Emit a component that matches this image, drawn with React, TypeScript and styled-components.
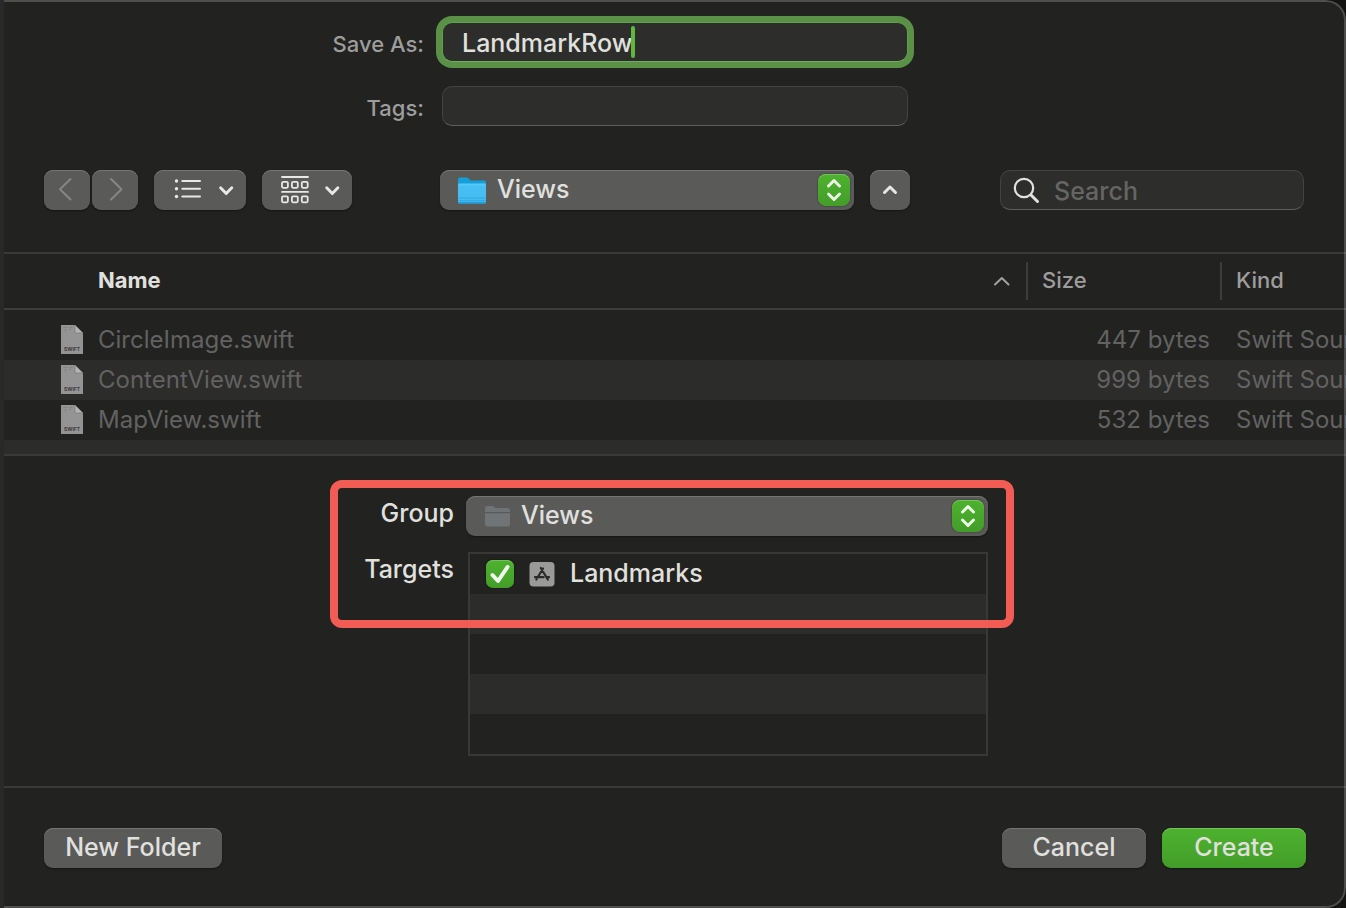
import React from "react";
import styled, { createGlobalStyle, css } from "styled-components";

const GlobalStyle = createGlobalStyle`
  *, *::before, *::after { box-sizing: border-box; }
  body {
    margin: 0;
    background: #141413;
    color: #e0e0df;
    font-family: Inter, "Liberation Sans", sans-serif;
    font-size: 25px;
    font-weight: 500;
    line-height: 32px;
  }
  button, input, select { font: inherit; color: inherit; }
`;

const Dialog = styled.main`
  position: relative;
  display: flex;
  flex-direction: column;
  min-height: 100vh;
  background: #222221;
  border-left: 4px solid #29292a;
  border-radius: 0 20px 20px 0;
  overflow: hidden;

  &::after {
    content: "";
    position: absolute;
    inset: 0 0 0 -4px;
    border: 2px solid rgba(255, 255, 255, 0.2);
    border-left: 0;
    border-radius: 0 20px 20px 0;
    pointer-events: none;
  }
`;

/* ---------- name and tags ---------- */

const NameForm = styled.div`
  display: grid;
  grid-template-columns: 1fr 466px 1fr;
  gap: 24px 18px;
  align-items: center;
  padding-top: 22px;
`;

const FieldLabel = styled.label`
  grid-column: 1;
  justify-self: end;
  padding-top: 4px;
  font-size: 22px;
  color: #9d9d9c;
`;

const fieldBox = css`
  height: 40px;
  border: 1px solid #434342;
  border-bottom-color: #5e5e5d;
  border-radius: 10px;
  background: #2d2d2c;
`;

const FocusedField = styled.div`
  ${fieldBox}
  display: flex;
  align-items: center;
  padding: 0 19px;
  border-color: #5fa04c;
  border-bottom-color: #74ab62;
  box-shadow: 0 0 0 6px #5a9147;
`;

const NameInput = styled.input`
  field-sizing: content;
  max-width: 100%;
  padding: 2px 0 0;
  border: 0;
  outline: 0;
  background: none;
`;

const Caret = styled.span`
  width: 4px;
  height: 32px;
  margin-left: -2px;
  border-radius: 2px;
  background: #5cb83f;
`;

const TagsInput = styled.input`
  ${fieldBox}
  width: 100%;
  padding: 0 19px;
  outline: 0;
`;

/* ---------- buttons and pop-ups ---------- */

const raised = css`
  height: 40px;
  border: 0;
  border-radius: 9px;
  background: #5a5a59;
  box-shadow: inset 0 1px 0 #757574, 0 1px 2px rgba(0, 0, 0, 0.4);
`;

const IconButton = styled.button<{ $width: number }>`
  ${raised}
  display: flex;
  align-items: center;
  justify-content: center;
  width: ${(p) => p.$width}px;
  padding: 0;
`;

const PushButton = styled.button<{ $primary?: boolean; $width: number }>`
  ${raised}
  width: ${(p) => p.$width}px;
  padding: 0 0 2px;
  text-align: center;
  ${(p) =>
    p.$primary &&
    css`
      background: linear-gradient(#4db22f, #439d29);
      box-shadow: inset 0 1px 0 #72c459, 0 1px 2px rgba(0, 0, 0, 0.4);
    `}
`;

const PopupShell = styled.div`
  ${raised}
  display: flex;
  align-items: center;
  gap: 10px;
  flex: 1;
  padding: 0 4px 0 17px;
`;

const PopupSelect = styled.select`
  appearance: none;
  flex: 1;
  height: 40px;
  padding: 0 0 2px;
  border: 0;
  outline: 0;
  background: none;

  option { background: #3a3a39; }
`;

const PopupCap = styled.span`
  display: flex;
  align-items: center;
  justify-content: center;
  width: 32px;
  height: 32px;
  border-radius: 8px;
  background: linear-gradient(#4db22f, #439d29);
  box-shadow: inset 0 1px 0 #72c459, 0 0 2px rgba(0, 0, 0, 0.5);
  pointer-events: none;
`;

/* ---------- toolbar ---------- */

const Toolbar = styled.div`
  display: grid;
  grid-template-columns: 396fr 470px 394fr;
  align-items: center;
  padding: 44px 42px 42px 40px;
`;

const ToolGroup = styled.div<{ $gap: number }>`
  display: flex;
  gap: ${(p) => p.$gap}px;
`;

const SearchField = styled.label`
  ${fieldBox}
  display: flex;
  align-items: center;
  justify-self: end;
  gap: 13px;
  width: 304px;
  padding: 2px 12px 0;
`;

const SearchInput = styled.input`
  flex: 1;
  min-width: 0;
  padding: 0;
  border: 0;
  outline: 0;
  background: none;

  &::placeholder { color: #656564; opacity: 1; }
`;

/* ---------- file list ---------- */

const FileTable = styled.table`
  width: 100%;
  table-layout: fixed;
  border-collapse: collapse;
  border-spacing: 0;
  border-top: 2px solid #3a3a39;

  tbody::before {
    content: "";
    display: block;
    height: 10px;
  }
`;

const HeadCell = styled.th<{ $width?: number }>`
  width: ${(p) => (p.$width ? `${p.$width}px` : "auto")};
  height: 56px;
  padding: 0;
  border-bottom: 2px solid #3d3d3c;
  font-size: 22px;
  text-align: left;
  color: #9d9d9c;
`;

const HeadLabel = styled.div<{ $sorted?: boolean }>`
  display: flex;
  align-items: center;
  justify-content: space-between;
  height: 38px;
  padding: ${(p) => (p.$sorted ? "0 16px 2px 94px" : "0 0 2px 14px")};
  border-left: ${(p) => (p.$sorted ? "0" : "2px solid #3d3d3c")};
  font-weight: ${(p) => (p.$sorted ? 700 : 500)};
  color: ${(p) => (p.$sorted ? "#e0e0df" : "inherit")};
`;

const FileRow = styled.tr`
  height: 40px;
  color: #626261;
  font-size: 24px;
  font-weight: 400;

  &:nth-child(even) { background: #2c2c2b; }
`;

const FileCell = styled.td<{ $end?: boolean }>`
  padding: ${(p) => (p.$end ? "0 10px 0 0" : "0 0 0 16px")};
  text-align: ${(p) => (p.$end ? "right" : "left")};
  white-space: nowrap;
  overflow: hidden;
`;

const FileName = styled.div`
  display: flex;
  align-items: center;
  gap: 14px;
  padding-left: 40px;
`;

const RowRemainder = styled.div`
  height: 16px;
  background: #2c2c2b;
  border-bottom: 2px solid #3a3a39;
`;

/* ---------- group and targets ---------- */

const Options = styled.section`
  flex: 1;
  padding: 24px 0 30px;
`;

const OptionsGrid = styled.div`
  position: relative;
  display: grid;
  grid-template-columns: 124px 522px;
  gap: 16px 12px;
  width: 690px;
  max-width: 100%;
  margin: 0 auto;
  padding-top: 16px;
`;

const OptionLabel = styled.label`
  justify-self: end;
  line-height: 34px;
`;

const Highlight = styled.div`
  position: absolute;
  top: 0;
  left: 0;
  width: 684px;
  height: 148px;
  border: 8px solid #f25c54;
  border-radius: 12px;
  pointer-events: none;
`;

const TargetList = styled.ul`
  justify-self: end;
  width: 520px;
  margin: 0;
  padding: 0;
  border: 2px solid #383837;
  list-style: none;
`;

const TargetRow = styled.li`
  display: flex;
  align-items: center;
  height: 40px;
  padding: 0 16px;

  &:nth-child(even) { background: #2c2c2b; }
`;

const TargetLabel = styled.label`
  display: flex;
  align-items: center;
  gap: 15px;
`;

const TargetName = styled.span`
  padding-bottom: 2px;
`;

const CheckSlot = styled.span`
  display: grid;
  width: 28px;
  height: 28px;

  > * { grid-area: 1 / 1; }
  svg { place-self: center; pointer-events: none; }
`;

const CheckBox = styled.input`
  appearance: none;
  width: 28px;
  height: 28px;
  margin: 0;
  border-radius: 7px;
  background: #5a5a59;
  box-shadow: inset 0 1px 0 #72c459, 0 0 2px rgba(0, 0, 0, 0.5);

  &:checked { background: linear-gradient(#4db22f, #439d29); }
  &:not(:checked) + svg { visibility: hidden; }
`;

/* ---------- footer ---------- */

const Footer = styled.footer`
  display: flex;
  justify-content: space-between;
  padding: 40px;
  border-top: 2px solid #3a3a39;
`;

/* ---------- icons ---------- */

type StrokeProps = { w: number; h: number; d: string; color?: string; width?: number };

const Stroke = ({ w, h, d, color = "#e8e8e7", width = 3 }: StrokeProps) => (
  <svg width={w} height={h} viewBox={`0 0 ${w} ${h}`} fill="none" stroke={color}
    strokeWidth={width} strokeLinecap="round" strokeLinejoin="round" aria-hidden="true">
    <path d={d} />
  </svg>
);

const ViewListIcon = () => (
  <svg width="92" height="40" viewBox="0 0 92 40" fill="none" stroke="#e8e8e7" strokeLinecap="round" strokeLinejoin="round" aria-hidden="true">
    <path d="M28.300 11H46M28.300 18.800H46M28.300 26.500H46" strokeWidth="2" />
    <g fill="#e8e8e7" stroke="none">
      <circle cx="22.500" cy="11" r="1.700" />
      <circle cx="22.500" cy="18.800" r="1.700" />
      <circle cx="22.500" cy="26.500" r="1.700" />
    </g>
    <path d="M66.600 17.800L72.200 23.600L77.800 17.800" strokeWidth="2.900" />
  </svg>
);

const GroupViewIcon = () => (
  <svg width="90" height="40" viewBox="0 0 90 40" fill="none" stroke="#e8e8e7" strokeLinecap="round" strokeLinejoin="round" aria-hidden="true">
    <path d="M20 7H46M20 21.900H46" strokeWidth="1.800" />
    {[11.900, 26.400].map((y) =>
      [20, 29.900, 39.800].map((x) => (
        <rect key={`${x}-${y}`} x={x} y={y} width="5.900" height="5.900" rx="1.200" strokeWidth="1.800" />
      ))
    )}
    <path d="M64.700 17.800L70.300 23.600L75.900 17.800" strokeWidth="2.900" />
  </svg>
);

const UpDownIcon = () => (
  <Stroke w={32} h={32} d="M10.500 12L16 6.500L21.500 12M10.500 20L16 25.500L21.500 20" color="#eaf5e4" />
);

const BlueFolder = () => (
  <svg width="30" height="28" viewBox="0 0 30 28" aria-hidden="true">
    <defs>
      <linearGradient id="folderFront" x1="0" y1="0" x2="0" y2="1">
        <stop offset="0" stopColor="#5ccbf8" />
        <stop offset="0.15" stopColor="#48bff3" />
        <stop offset="1" stopColor="#45bcf2" />
      </linearGradient>
    </defs>
    <g transform="translate(0 0.600)">
      <path d="M1 3a2 2 0 0 1 2-2h6c1.500 0 2 .5 2.800 1.200L13.500 4H27.500a1.500 1.500 0 0 1 1.500 1.500V12H1z" fill="#149fda" />
      <path d="M1 8a1 1 0 0 1 1-1H28a1 1 0 0 1 1 1V25.500a1.500 1.500 0 0 1-1.500 1.500H2.500A1.500 1.500 0 0 1 1 25.500z" fill="url(#folderFront)" />
      <path d="M1 21.500H29M1 24H29" stroke="#2ba6df" strokeWidth="0.800" />
      <path d="M1 25.500H29a1.500 1.500 0 0 1-1.500 1.500H2.500A1.500 1.500 0 0 1 1 25.500z" fill="#1c9bd6" />
    </g>
  </svg>
);

const GrayFolder = () => (
  <svg width="28" height="24" viewBox="0 0 28 24" aria-hidden="true">
    <path d="M2 8V4.200A2.200 2.200 0 0 1 4.200 2H9c1 0 1.500.3 2.200 1L12.500 4H24.500a2.500 2.500 0 0 1 2.500 2.500V8z" fill="#6f7376" />
    <path d="M2 9.300H27V20a2.500 2.500 0 0 1-2.500 2.500H4.500A2.500 2.500 0 0 1 2 20z" fill="#707477" />
  </svg>
);

const SearchIcon = () => (
  <svg width="28" height="28" viewBox="0 0 28 28" fill="none" stroke="#e2e2e1" strokeLinecap="round" aria-hidden="true">
    <circle cx="11" cy="11" r="9.200" strokeWidth="2.200" />
    <path d="M18 18L24.500 24.500" strokeWidth="3" />
  </svg>
);

const SwiftFileIcon = () => (
  <svg width="24" height="32" viewBox="0 0 24 32" aria-hidden="true">
    <path d="M1 1H15L23 9V30H1z" fill="#949494" />
    <path d="M15 1L23 9H16a1 1 0 0 1-1-1z" fill="#b4b4b4" stroke="#6e6e6e" strokeWidth="0.600" />
    <path d="M3.500 3.500H8M9.500 3.500H12.500M4 6H6.500M9 5.500H11M5 8H6.500" stroke="#7e7e7e" strokeWidth="0.700" />
    <text x="12" y="27" textAnchor="middle" fontSize="5" fontWeight="700" fill="#3c3c3c">SWIFT</text>
  </svg>
);

const AppIcon = () => (
  <svg width="26" height="26" viewBox="0 0 26 26" aria-hidden="true">
    <rect x="0.500" y="1" width="25" height="24.500" rx="4" fill="#9a9a99" />
    <g fill="none" stroke="#2b2b2a" strokeWidth="2.200" strokeLinecap="round">
      <path d="M14 7.500L9.200 15.500M11.800 7L18.800 18.500M6 16.200H14.500M17.800 16.200H20" />
      <path d="M7.700 17.800L7.300 18.500" />
    </g>
  </svg>
);

/* ---------- page ---------- */

const files = [
  { name: "CircleImage.swift", size: "447 bytes" },
  { name: "ContentView.swift", size: "999 bytes" },
  { name: "MapView.swift", size: "532 bytes" },
];

export default function App() {
  return (
    <Dialog>
      <GlobalStyle />
      <NameForm>
        <FieldLabel htmlFor="save-as">Save As:</FieldLabel>
        <FocusedField>
          <NameInput id="save-as" defaultValue="LandmarkRow" />
          <Caret />
        </FocusedField>
        <FieldLabel htmlFor="tags">Tags:</FieldLabel>
        <TagsInput id="tags" />
      </NameForm>

      <Toolbar>
        <ToolGroup $gap={16}>
          <ToolGroup $gap={2}>
            <IconButton $width={46} aria-label="Back">
              <Stroke w={46} h={40} d="M26.500 9L16 19.300L26.500 29.500" color="#868685" width={2} />
            </IconButton>
            <IconButton $width={46} aria-label="Forward">
              <Stroke w={46} h={40} d="M19 9L29.500 19.300L19 29.500" color="#868685" width={2} />
            </IconButton>
          </ToolGroup>
          <IconButton $width={92} aria-label="View as list">
            <ViewListIcon />
          </IconButton>
          <IconButton $width={90} aria-label="Group items">
            <GroupViewIcon />
          </IconButton>
        </ToolGroup>
        <ToolGroup $gap={16}>
          <PopupShell>
            <BlueFolder />
            <PopupSelect aria-label="Location" defaultValue="Views">
              <option>Views</option>
            </PopupSelect>
            <PopupCap><UpDownIcon /></PopupCap>
          </PopupShell>
          <IconButton $width={40} aria-label="Collapse browser">
            <Stroke w={40} h={40} d="M14.500 22.500L20 17L25.500 22.500" />
          </IconButton>
        </ToolGroup>
        <SearchField>
          <SearchIcon />
          <SearchInput type="text" placeholder="Search" aria-label="Search" />
        </SearchField>
      </Toolbar>

      <FileTable>
        <thead>
          <tr>
            <HeadCell>
              <HeadLabel $sorted>
                Name
                <Stroke w={18} h={12} d="M3 10.500L9.800 4L16.500 10.500" color="#a1a1a0" width={2} />
              </HeadLabel>
            </HeadCell>
            <HeadCell $width={194}><HeadLabel>Size</HeadLabel></HeadCell>
            <HeadCell $width={126}><HeadLabel>Kind</HeadLabel></HeadCell>
          </tr>
        </thead>
        <tbody>
          {files.map((file) => (
            <FileRow key={file.name}>
              <FileCell>
                <FileName>
                  <SwiftFileIcon />
                  {file.name}
                </FileName>
              </FileCell>
              <FileCell $end>{file.size}</FileCell>
              <FileCell>Swift Source</FileCell>
            </FileRow>
          ))}
        </tbody>
      </FileTable>
      <RowRemainder />

      <Options>
        <OptionsGrid>
          <OptionLabel htmlFor="group">Group</OptionLabel>
          <PopupShell>
            <GrayFolder />
            <PopupSelect id="group" defaultValue="Views">
              <option>Views</option>
            </PopupSelect>
            <PopupCap><UpDownIcon /></PopupCap>
          </PopupShell>
          <OptionLabel as="span" id="targets-label">Targets</OptionLabel>
          <TargetList aria-labelledby="targets-label">
            <TargetRow>
              <TargetLabel>
                <CheckSlot>
                  <CheckBox type="checkbox" defaultChecked />
                  <Stroke w={28} h={28} d="M6.500 15L12 21L21.500 7" color="#f0f8ec" width={4} />
                </CheckSlot>
                <AppIcon />
                <TargetName>Landmarks</TargetName>
              </TargetLabel>
            </TargetRow>
            <TargetRow />
            <TargetRow />
            <TargetRow />
            <TargetRow />
          </TargetList>
          <Highlight />
        </OptionsGrid>
      </Options>

      <Footer>
        <PushButton $width={178}>New Folder</PushButton>
        <ToolGroup $gap={16}>
          <PushButton $width={144}>Cancel</PushButton>
          <PushButton $width={144} $primary>Create</PushButton>
        </ToolGroup>
      </Footer>
    </Dialog>
  );
}
